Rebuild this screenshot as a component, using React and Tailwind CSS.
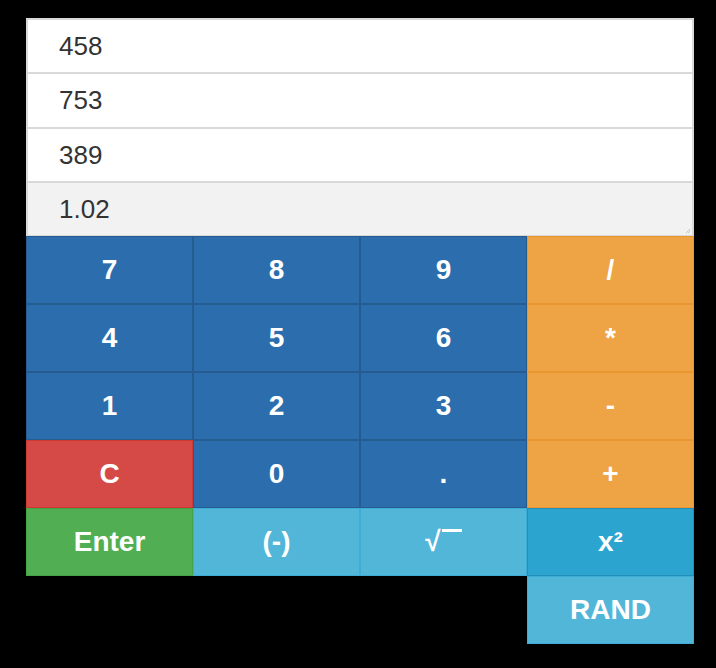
const rows = [
  { value: '458', h: 'h-[54px]', bg: 'bg-white' },
  { value: '753', h: 'h-[55px]', bg: 'bg-white' },
  { value: '389', h: 'h-[54px]', bg: 'bg-white' },
  { value: '1.02', h: 'h-[55px]', bg: 'bg-[#f2f2f2]', last: true },
];

const blue = 'bg-[#2c6ead] border-[#265b8f]';
const orange = 'bg-[#eea345] border-[#ea962e]';

const sqrt = (
  <span className="flex items-start">
    <span>√</span>
    <span className="mt-[1px] ml-[1px] h-[3px] w-[20px] bg-white" />
  </span>
);

const keys = [
  ['7', blue], ['8', blue], ['9', blue], ['/', orange],
  ['4', blue], ['5', blue], ['6', blue], ['*', orange],
  ['1', blue], ['2', blue], ['3', blue], ['-', orange],
  ['C', 'bg-[#d54a46] border-[#cf3833]'], ['0', blue], ['.', blue], ['+', orange],
  ['Enter', 'bg-[#52ae52] border-[#45a445]'],
  ['(-)', 'bg-[#52b6d9] border-[#3eacd4]'],
  ['sqrt', 'bg-[#52b6d9] border-[#3eacd4]'],
  ['x²', 'bg-[#2ba5cf] border-[#228fb8]'],
];

function Key({ label, cls }) {
  return (
    <button
      className={`h-[68px] border text-white font-bold text-[28px] leading-none flex items-center justify-center ${cls}`}
    >
      {label}
    </button>
  );
}

export default function App() {
  return (
    <div className="min-h-[668px] w-full bg-black pt-[18px] pl-[26px]" style={{ fontFamily: '"Liberation Sans", Arial, sans-serif' }}>
      <div className="w-[668px]">
        <div>
          {rows.map((r) => (
            <div
              key={r.value}
              className={`${r.h} ${r.bg} relative border-x-2 border-t-2 ${r.last ? 'border-b' : ''} border-[#d9d9d9] pl-[31px] flex items-center text-[26px] text-[#333]`}
            >
              {r.value}
              {r.last && (
                <svg className="absolute right-[1px] bottom-[1px]" width="6" height="6" viewBox="0 0 6 6">
                  <path d="M5 1 L1 5 M5 3 L3 5" stroke="#bbb" strokeWidth="0.8" />
                </svg>
              )}
            </div>
          ))}
        </div>
        <div className="grid grid-cols-4">
          {keys.map(([label, cls]) => (
            <Key key={label} label={label === 'sqrt' ? sqrt : label} cls={cls} />
          ))}
          <div className="col-span-3" />
          <Key label="RAND" cls="bg-[#52b6d9] border-[#3eacd4]" />
        </div>
      </div>
    </div>
  );
}
